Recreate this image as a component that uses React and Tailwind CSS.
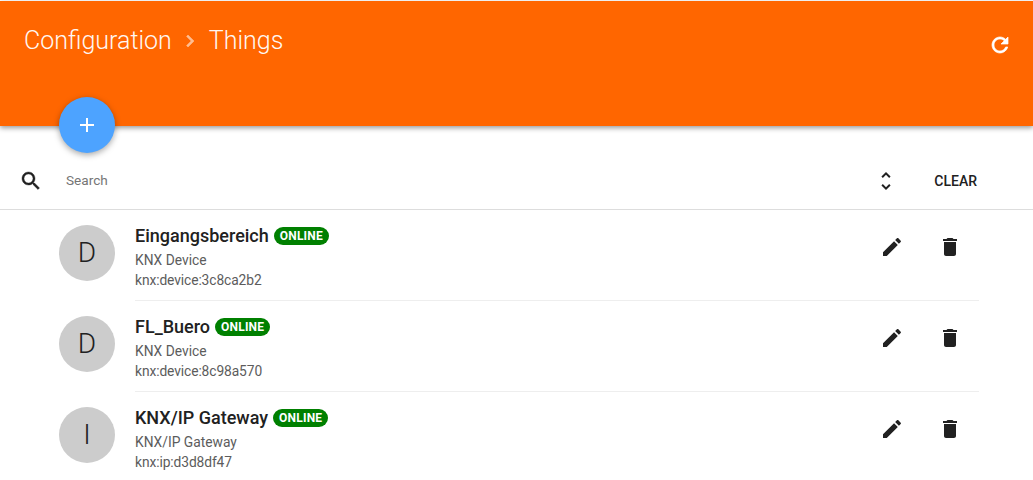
import React from "react";

const things = [
    {letter: "D", name: "Eingangsbereich", type: "KNX Device", uid: "knx:device:3c8ca2b2"},
    {letter: "D", name: "FL_Buero", type: "KNX Device", uid: "knx:device:8c98a570"},
    {letter: "I", name: "KNX/IP Gateway", type: "KNX/IP Gateway", uid: "knx:ip:d3d8df47"},
];

function Icon({d, className}) {
    return (
        <svg viewBox="0 0 24 24" fill="currentColor" className={className}>
            <path d={d}/>
        </svg>
    );
}

const icons = {
    search: "M15.5 14h-.79l-.28-.27C15.41 12.59 16 11.11 16 9.5 16 5.91 13.09 3 9.5 3S3 5.91 3 9.5 5.91 16 9.5 16c1.61 0 3.09-.59 4.23-1.57l.27.28v.79l5 4.99L20.49 19l-4.99-5zm-6 0C7.01 14 5 11.99 5 9.5S7.01 5 9.5 5 14 7.01 14 9.5 11.99 14 9.5 14z",
    edit: "M3 17.25V21h3.75L17.81 9.94l-3.75-3.75L3 17.25zM20.71 7.04c.39-.39.39-1.02 0-1.41l-2.34-2.34c-.39-.39-1.02-.39-1.41 0l-1.83 1.83 3.75 3.75 1.83-1.83z",
    trash: "M6 19c0 1.1.9 2 2 2h8c1.1 0 2-.9 2-2V7H6v12zM19 4h-3.5l-1-1h-5l-1 1H5v2h14V4z",
    refresh: "M17.65 6.35C16.2 4.9 14.21 4 12 4c-4.42 0-7.99 3.58-7.99 8s3.57 8 7.99 8c3.73 0 6.84-2.55 7.73-6h-2.08c-.82 2.33-3.04 4-5.65 4-3.31 0-6-2.69-6-6s2.69-6 6-6c1.66 0 3.14.69 4.22 1.78L13 11h7V4l-2.35 2.35z",
    unfold: "M12 5.83L15.17 9l1.41-1.41L12 3 7.41 7.59 8.83 9 12 5.83zm0 12.34L8.83 15l-1.41 1.41L12 21l4.59-4.59L15.17 15 12 18.17z",
    add: "M19 13h-6v6h-2v-6H5v-2h6V5h2v6h6v2z",
    chevron: "M10 6L8.59 7.41 13.17 12l-4.58 4.59L10 18l6-6z",
};

function ThingRow({thing, last}) {
    return (
        <div className="flex h-[91px]">
            <div className="w-[135px] shrink-0 pl-[59px] pt-[15px]">
                <div className="w-14 h-14 rounded-full bg-[#cccccc] flex items-center justify-center text-[28px] font-light text-[#212121]">
                    {thing.letter}
                </div>
            </div>
            <div className={`flex-1 mr-[54px] flex justify-between ${last ? "" : "border-b border-[#eeeeee]"}`}>
                <div className="pt-[15px]">
                    <div className="flex items-center gap-[5px] h-[22px]">
                        <span className="text-lg font-medium text-[#212121]">{thing.name}</span>
                        <span className="bg-[#008000] text-white text-xs font-bold tracking-[0.2px] rounded-full px-[6px] h-[18px] leading-[18px]">
                            ONLINE
                        </span>
                    </div>
                    <div className="text-[13.8px] leading-5 text-[#5c5c5c] mt-[3px]">{thing.type}</div>
                    <div className="text-[13.8px] leading-5 tracking-[-0.1px] text-[#5c5c5c]">{thing.uid}</div>
                </div>
                <div className="flex pt-[25px] pr-[17px] gap-[34px] text-[#212121]">
                    <Icon d={icons.edit} className="w-6 h-6"/>
                    <Icon d={icons.trash} className="w-6 h-6"/>
                </div>
            </div>
        </div>
    );
}

export default function App() {
    return (
        <div className="relative h-[480px] overflow-hidden bg-white font-['Roboto',sans-serif]">
            {/* Orange header */}
            <div className="mt-px h-[125px] bg-[#ff6600] shadow-[0_2px_5px_rgba(0,0,0,0.4)] flex justify-between items-start pl-6 pr-[21px] text-white">
                <div className="flex items-center mt-[24px] text-[25px] font-light h-8 opacity-95">
                    <span>Configuration</span>
                    <Icon d={icons.chevron} className="w-6 h-6 mx-[6.5px] opacity-60 stroke-current stroke-[0.6]"/>
                    <span>Things</span>
                </div>
                <Icon d={icons.refresh} className="w-6 h-6 mt-[32px] stroke-current stroke-[0.7]"/>
            </div>

            {/* Add button sits over the header edge */}
            <div className="absolute left-[59px] top-[97px] w-14 h-14 rounded-full bg-[#4da3ff] shadow-[0_2px_6px_rgba(0,0,0,0.35)] flex items-center justify-center text-white">
                <Icon d={icons.add} className="w-6 h-6"/>
            </div>

            {/* Search bar */}
            <div className="h-[83px] pt-[25px] border-b border-[#dddddd] flex items-center pl-[19px] pr-[56px] mt-px">
                <Icon d={icons.search} className="w-6 h-6 text-[#212121] stroke-current stroke-[0.4]"/>
                <span className="ml-[23px] flex-1 text-[13.6px] text-[#757575]">Search</span>
                <Icon d={icons.unfold} className="w-6 h-6 text-[#212121] mr-[36px]"/>
                <span className="text-sm font-medium text-[#212121]">CLEAR</span>
            </div>

            {things.map((thing, i) => (
                <ThingRow key={thing.uid} thing={thing} last={i === things.length - 1}/>
            ))}
        </div>
    );
}
